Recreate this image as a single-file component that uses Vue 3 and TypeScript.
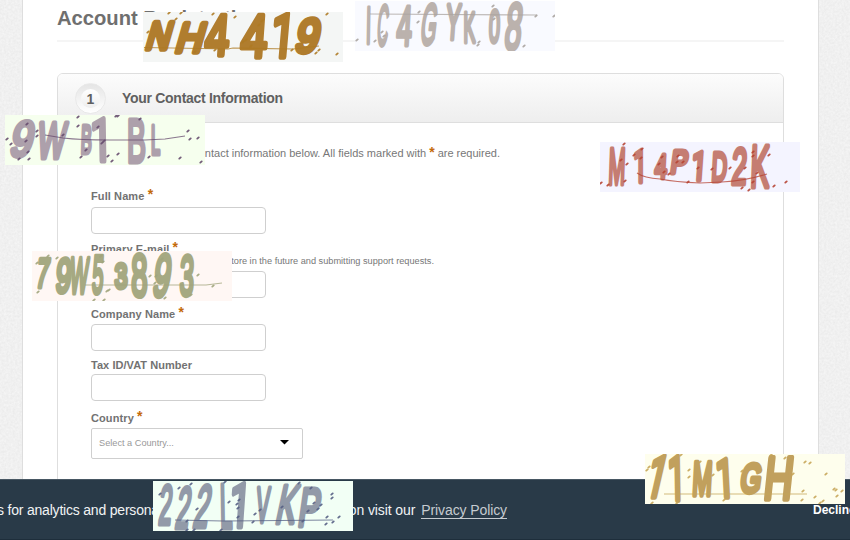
<script setup lang="ts">
type Glyph = [char: string, x1: number, y1: number, x2: number, y2: number, slant: number]
interface Captcha {
  id: string
  ink: string
  mark: string
  weight: number
  glyphs: Glyph[]
  line: string
  dots: [number, number][]
}

const captchas: Captcha[] = [
  {
    id: 'amber', ink: '#b07d2e', mark: '#ae7a22', weight: 5.5,
    glyphs: [['N', 3, 8, 31, 40, -16], ['H', 33, 9, 64, 43, -16], ['4', 62, 1, 87, 46, -4], ['4', 98, 1, 125, 48, -4], ['1', 131, 1, 149, 48, -5], ['9', 152, 5, 179, 43, -12]],
    line: 'M1 35.5 L85 37 L90 36 L150 37 L176 34',
    dots: [[26, 1], [38, 1], [33, 7], [70, 2], [92, 5], [5, 20], [119, 9], [116, 13], [100, 30], [103, 28], [108, 34], [52, 40], [72, 38], [149, 38], [173, 41], [176, 38], [184, 2], [194, 42]]
  },
  {
    id: 'stone', ink: '#bbb2ad', mark: '#a9a39f', weight: 4.8,
    glyphs: [['I', 11, 4, 16, 44, -1], ['C', 21, 2, 35, 46, -4], ['4', 41, 3, 58, 46, -3], ['G', 65, 1, 84, 45, -7], ['Y', 90, 1, 107, 40, -4], ['K', 108, 9, 121, 43, 0], ['0', 133, 7, 146, 43, -2], ['8', 149, 0, 169, 50, -6]],
    line: 'M15 13 L182 14',
    dots: [[2, 39], [20, 40], [27, 31], [64, 11], [63, 21], [124, 41], [123, 44], [138, 5], [169, 45], [181, 15], [199, 15], [139, 18], [29, 35]]
  },
  {
    id: 'plum', ink: '#ada0ab', mark: '#654a6d', weight: 5,
    glyphs: [['9', 5, 4, 31, 43, -12], ['W', 30, 5, 64, 45, -7], ['B', 75, 8, 88, 40, -2], ['1', 89, 2, 104, 48, 1], ['B', 122, 2, 141, 49, 0], ['L', 145, 8, 156, 41, 0]],
    line: 'M40 20 L58 23 Q75 25 105 25 L140 25 L160 24 L180 21',
    dots: [[2, 24], [6, 29], [22, 9], [32, 16], [32, 21], [21, 26], [23, 37], [14, 44], [24, 44], [58, 20], [73, 2], [73, 11], [93, 12], [111, 1], [113, 1], [97, 28], [99, 26], [81, 35], [76, 42], [103, 41], [107, 46], [113, 39], [135, 4], [144, 42], [183, 16], [185, 24], [193, 23], [175, 43], [196, 47]]
  },
  {
    id: 'rose', ink: '#c57d72', mark: '#b64232', weight: 5,
    glyphs: [['M', 8, 4, 26, 44, -2], ['1', 35, 7, 45, 42, 0], ['4', 54, 10, 68, 38, -3], ['P', 70, 6, 89, 33, -8], ['1', 93, 8, 105, 40, -4], ['D', 111, 8, 128, 41, -3], ['2', 131, 4, 148, 44, -3], ['K', 150, 1, 170, 47, -2]],
    line: 'M37 31 Q44 36 60 37 Q75 40 100 41 L122 40 Q145 39 167 32',
    dots: [[24, 2], [42, 7], [34, 13], [21, 18], [27, 22], [41, 16], [62, 15], [78, 14], [59, 22], [77, 20], [83, 20], [64, 30], [69, 32], [98, 26], [112, 27], [130, 26], [145, 26], [153, 10], [153, 14], [169, 13], [157, 31], [153, 40], [88, 40], [25, 39], [1, 41], [8, 43], [142, 46], [149, 48], [174, 44], [186, 40]]
  },
  {
    id: 'olive', ink: '#a6a982', mark: '#a0a47b', weight: 5.2,
    glyphs: [['7', 3, 6, 19, 39, -8], ['9', 23, 6, 41, 44, -5], ['W', 36, 5, 59, 45, -4], ['5', 59, 3, 73, 45, -3], ['3', 82, 11, 96, 40, 0], ['8', 99, 2, 116, 48, 0], ['9', 120, 2, 141, 48, -8], ['3', 147, 3, 163, 47, -2]],
    line: 'M53 34 L174 34 L190 32',
    dots: [[5, 12], [6, 41], [16, 5], [25, 7], [56, 8], [69, 5], [71, 11], [77, 39], [75, 40], [62, 49], [72, 49], [118, 25], [124, 25], [123, 32], [110, 8], [133, 47], [130, 8], [166, 24], [159, 44], [181, 35]]
  },
  {
    id: 'slate', ink: '#929aa8', mark: '#545e83', weight: 4.8,
    glyphs: [['2', 5, 2, 21, 45, -5], ['2', 22, 4, 40, 49, -8], ['2', 40, 2, 60, 48, -10], ['L', 66, 1, 80, 49, 1], ['1', 79, 1, 95, 48, -4], ['V', 101, 4, 119, 43, -4], ['K', 123, 2, 147, 44, -12], ['P', 145, 5, 169, 47, -8]],
    line: 'M22 39 L70 40 L180 39',
    dots: [[7, 13], [26, 7], [38, 3], [72, 1], [44, 28], [34, 40], [34, 49], [41, 49], [68, 49], [76, 21], [84, 23], [86, 19], [85, 27], [85, 36], [100, 41], [102, 33], [107, 29], [129, 26], [146, 2], [158, 7], [161, 22], [155, 30], [150, 40], [165, 28], [168, 24], [179, 13], [179, 17], [174, 36], [173, 43], [180, 41], [186, 36]]
  },
  {
    id: 'gold', ink: '#c1a05d', mark: '#c6a557', weight: 5.5,
    glyphs: [['1', 3, 1, 22, 46, -13], ['1', 25, 1, 38, 49, 1], ['M', 47, 6, 68, 44, -3], ['1', 73, 4, 87, 46, 3], ['G', 95, 8, 118, 41, -8], ['H', 119, 1, 149, 48, -6]],
    line: 'M19 40 L162 40',
    dots: [[2, 16], [4, 13], [36, 1], [44, 16], [44, 23], [55, 8], [68, 21], [97, 17], [79, 46], [7, 49], [32, 49], [126, 1], [140, 4], [148, 20], [160, 8], [165, 9], [181, 20], [189, 35], [191, 36], [197, 37], [192, 42], [158, 37], [157, 46], [170, 43], [178, 47], [175, 49]]
  }
]

const inkShare: Record<string, number> = { I: 0.3, '1': 0.5, W: 1, V: 1 }

function glyphAttrs(g: Glyph, weight: number) {
  const [char, x1, y1, x2, y2, slant] = g
  const inset = weight / 2
  const height = y2 - y1 - weight
  const lean = Math.tan((slant * Math.PI) / 180) * height
  const width = Math.max(5, (x2 - x1 - weight * 0.7 - Math.abs(lean) * 0.6) / (inkShare[char] ?? 0.82))
  return {
    class: char === '1' ? 'plain-one' : undefined,
    transform: `translate(${(x1 + x2) / 2 + lean / 2} ${y2 - inset}) skewX(${slant})`,
    'font-size': height / 0.69,
    textLength: width,
    x: -width / 2
  }
}
</script>

<template>
  <div class="page">
    <svg class="grain" width="850" height="540" aria-hidden="true">
      <filter id="paper" color-interpolation-filters="sRGB">
        <feTurbulence type="fractalNoise" baseFrequency="0.45" numOctaves="2" seed="4" />
        <feColorMatrix values="0.06 0 0 0 0.911  0.06 0 0 0 0.911  0.06 0 0 0 0.911  0 0 0 0 1" />
      </filter>
      <rect width="850" height="540" filter="url(#paper)" />
    </svg>

    <main class="sheet">
      <h1>Account Registration</h1>
      <section class="panel">
        <header class="panel-head">
          <span class="step"><b>1</b></span>
          <h2>Your Contact Information</h2>
        </header>
        <form class="fields" @submit.prevent>
          <p class="intro">Please provide your contact information below. All fields marked with <i class="req">*</i> are required.</p>
          <label class="name">Full Name <i class="req">*</i></label>
          <input type="text" />
          <label class="email">Primary E-mail <i class="req">*</i></label>
          <small>Used for accessing our store in the future and submitting support requests.</small>
          <input type="text" />
          <label class="company">Company Name <i class="req">*</i></label>
          <input type="text" />
          <label class="tax">Tax ID/VAT Number</label>
          <input type="text" />
          <label class="country">Country <i class="req">*</i></label>
          <div class="select">
            <span>Select a Country...</span>
            <svg width="9" height="5" viewBox="0 0 9 5"><path d="M0 0H9L4.5 4.6Z" /></svg>
          </div>
        </form>
      </section>
    </main>

    <footer class="cookies">
      <span class="lead">s for analytics and personalized content.</span>
      <span class="more">For more information visit our <a>Privacy Policy</a></span>
      <b>Decline</b>
    </footer>

    <div v-for="c in captchas" :key="c.id" class="captcha" :class="c.id">
      <svg width="200" height="50" viewBox="0 0 200 50">
        <g class="letters" :fill="c.ink" :stroke="c.ink" :stroke-width="c.weight">
          <text v-for="(g, i) in c.glyphs" :key="i" v-bind="glyphAttrs(g, c.weight)" lengthAdjust="spacingAndGlyphs">{{ g[0] }}</text>
        </g>
        <path class="scratch" :d="c.line" :stroke="c.mark" />
        <path v-for="(d, i) in c.dots" :key="i" class="dot" :d="`M${d[0] - 0.7} ${d[1] + 0.6}l1.4 -1.2`" :stroke="c.mark" />
      </svg>
    </div>
  </div>
</template>

<style>
body { margin: 0; overflow: hidden; }
</style>

<style scoped>
* { box-sizing: border-box; }
.page { position: relative; width: 850px; height: 540px; overflow: hidden; font-family: "Liberation Sans", Arial, sans-serif; color: #727272; }
.grain { position: absolute; inset: 0; }
.sheet { position: relative; width: 797px; height: 479px; margin-left: 22px; padding: 6px 34px 0; background: #fff; border: solid #dedede; border-width: 0 1px; overflow: hidden; }
h1 { height: 36px; margin: 0 0 31px; border-bottom: 2px solid #f5f5f5; font-size: 20.2px; line-height: 24px; color: #6f6f6f; }
.panel { width: 727px; height: 500px; border: 1px solid #dedede; border-radius: 6px 6px 0 0; }
.panel-head { display: flex; align-items: center; height: 49px; padding-left: 17px; gap: 16px; border-bottom: 1px solid #dedede; border-radius: 5px 5px 0 0; background: linear-gradient(#fcfcfc, #eee); }
.step { display: flex; align-items: center; justify-content: center; width: 31px; height: 31px; border-radius: 50%; border: 1px solid #e9e9e9; background: linear-gradient(#e5e5e5, #fff); }
.step b { width: 19px; height: 19px; border-radius: 50%; background: linear-gradient(#fff, #eee); font-size: 14px; line-height: 20px; text-align: center; color: #606060; }
h2 { margin: 0; font-size: 14px; line-height: 18px; letter-spacing: -.29px; color: #606060; }
.fields { display: flex; flex-direction: column; align-items: flex-start; padding: 22px 33px 0; }
.intro { display: flex; justify-content: flex-end; gap: 3px; width: 409px; margin: 0; height: 16px; font-size: 11px; line-height: 16px; white-space: nowrap; color: #777; }
label { display: block; height: 16px; font-size: 11px; font-weight: bold; line-height: 16px; letter-spacing: .1px; }
.req { position: relative; top: -1px; font: bold 14px/10px "Liberation Sans", sans-serif; color: #c46a0a; letter-spacing: 0; }
.intro .req { font-size: 14px; line-height: 16px; }
.name { margin: 27px 0 3px; }
.email { margin: 7px 0 0; height: 14px; }
small { display: flex; justify-content: flex-end; width: 343px; height: 14px; margin-bottom: 2px; font-size: 9.2px; line-height: 13px; color: #777; white-space: nowrap; }
.company { margin: 8px 0 2px; }
.tax { margin: 6px 0 1px; letter-spacing: .05px; }
.country { margin: 9px 0 2px; }
input { display: block; width: 175px; height: 27px; padding: 0; border: 1px solid #cfcfcf; border-radius: 4px; background: #fff; }
.select { display: flex; align-items: center; justify-content: space-between; width: 212px; height: 31px; padding: 0 13px 2px 7px; border: 1px solid #cfcfcf; border-radius: 2px; font-size: 9.2px; color: #999; }
.cookies { position: relative; display: flex; height: 61px; background: #293a48; border-top: 1px solid #485763; border-bottom: 1px solid #1e2e3b; color: #f1f3f4; font-size: 14px; line-height: 60px; letter-spacing: -.2px; white-space: nowrap; }
.cookies > * { flex: none; }
.lead { width: 220px; margin-left: -3px; overflow: hidden; }
.more { width: 290px; display: flex; justify-content: flex-end; align-items: center; gap: 6px; letter-spacing: -.1px; }
.more a { margin-top: 2px; line-height: 15px; color: #c5cbd0; border-bottom: 1px solid #c5cbd0; }
.cookies b { margin-left: 306px; font-size: 12px; letter-spacing: 0; color: #fff; }
.captcha { position: absolute; width: 200px; height: 50px; overflow: hidden; }
.captcha svg { display: block; }
.letters { font-family: "Liberation Sans", sans-serif; stroke-linejoin: round; }
.plain-one { font-family: Roboto, sans-serif; }
.scratch { fill: none; stroke-width: 1.1; opacity: .75; }
.dot { fill: none; stroke-width: 1.9; stroke-linecap: round; opacity: .9; }
.amber { left: 143px; top: 12px; background: #f4f6f5; }
.stone { left: 355px; top: 1px; background: #f9faff; }
.plum { left: 5px; top: 115px; background: #f6ffee; }
.rose { left: 600px; top: 142px; background: #f4f4ff; }
.olive { left: 32px; top: 251px; background: #fff7f4; }
.slate { left: 153px; top: 481px; background: #f2fff5; }
.gold { left: 645px; top: 454px; background: #fefeed; }
</style>
